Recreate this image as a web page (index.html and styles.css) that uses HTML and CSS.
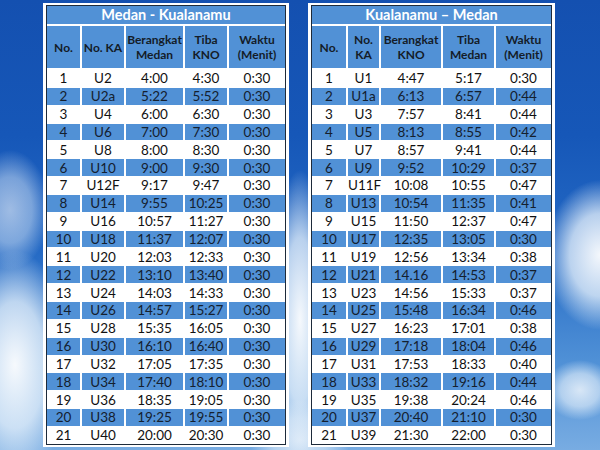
FILE: index.html
```html
<!DOCTYPE html>
<html lang="id">
<head>
<meta charset="utf-8">
<title>Jadwal KA Bandara Kualanamu</title>
<link rel="stylesheet" href="styles.css">
</head>
<body>
<div class="sky">
  <div class="cloud c1"></div>
  <div class="cloud c2"></div>
  <div class="cloud c3"></div>
  <div class="cloud c4"></div>
  <div class="cloud c5"></div>
  <div class="cloud c6"></div>
</div>
<main class="page">
  <section class="card">
    <table class="sched sched-left">
      <colgroup><col class="w1"><col class="w2"><col class="w3"><col class="w4"><col class="w5"></colgroup>
      <thead>
        <tr class="title-row"><th colspan="5">Medan - Kualanamu</th></tr>
        <tr class="head-row"><th>No.</th><th>No. KA</th><th>Berangkat<br>Medan</th><th>Tiba<br>KNO</th><th>Waktu<br>(Menit)</th></tr>
      </thead>
      <tbody>
        <tr><td>1</td><td>U2</td><td>4:00</td><td>4:30</td><td>0:30</td></tr>
        <tr class="alt"><td>2</td><td>U2a</td><td>5:22</td><td>5:52</td><td>0:30</td></tr>
        <tr><td>3</td><td>U4</td><td>6:00</td><td>6:30</td><td>0:30</td></tr>
        <tr class="alt"><td>4</td><td>U6</td><td>7:00</td><td>7:30</td><td>0:30</td></tr>
        <tr><td>5</td><td>U8</td><td>8:00</td><td>8:30</td><td>0:30</td></tr>
        <tr class="alt"><td>6</td><td>U10</td><td>9:00</td><td>9:30</td><td>0:30</td></tr>
        <tr><td>7</td><td>U12F</td><td>9:17</td><td>9:47</td><td>0:30</td></tr>
        <tr class="alt"><td>8</td><td>U14</td><td>9:55</td><td>10:25</td><td>0:30</td></tr>
        <tr><td>9</td><td>U16</td><td>10:57</td><td>11:27</td><td>0:30</td></tr>
        <tr class="alt"><td>10</td><td>U18</td><td>11:37</td><td>12:07</td><td>0:30</td></tr>
        <tr><td>11</td><td>U20</td><td>12:03</td><td>12:33</td><td>0:30</td></tr>
        <tr class="alt"><td>12</td><td>U22</td><td>13:10</td><td>13:40</td><td>0:30</td></tr>
        <tr><td>13</td><td>U24</td><td>14:03</td><td>14:33</td><td>0:30</td></tr>
        <tr class="alt"><td>14</td><td>U26</td><td>14:57</td><td>15:27</td><td>0:30</td></tr>
        <tr><td>15</td><td>U28</td><td>15:35</td><td>16:05</td><td>0:30</td></tr>
        <tr class="alt"><td>16</td><td>U30</td><td>16:10</td><td>16:40</td><td>0:30</td></tr>
        <tr><td>17</td><td>U32</td><td>17:05</td><td>17:35</td><td>0:30</td></tr>
        <tr class="alt"><td>18</td><td>U34</td><td>17:40</td><td>18:10</td><td>0:30</td></tr>
        <tr><td>19</td><td>U36</td><td>18:35</td><td>19:05</td><td>0:30</td></tr>
        <tr class="alt"><td>20</td><td>U38</td><td>19:25</td><td>19:55</td><td>0:30</td></tr>
        <tr><td>21</td><td>U40</td><td>20:00</td><td>20:30</td><td>0:30</td></tr>
      </tbody>
    </table>
  </section>
  <section class="card card-right">
    <table class="sched sched-right">
      <colgroup><col class="r1"><col class="r2"><col class="r3"><col class="r4"><col class="r5"></colgroup>
      <thead>
        <tr class="title-row"><th colspan="5">Kualanamu – Medan</th></tr>
        <tr class="head-row"><th>No.</th><th>No.<br>KA</th><th>Berangkat<br>KNO</th><th>Tiba<br>Medan</th><th>Waktu<br>(Menit)</th></tr>
      </thead>
      <tbody>
        <tr><td>1</td><td>U1</td><td>4:47</td><td>5:17</td><td>0:30</td></tr>
        <tr class="alt"><td>2</td><td>U1a</td><td>6:13</td><td>6:57</td><td>0:44</td></tr>
        <tr><td>3</td><td>U3</td><td>7:57</td><td>8:41</td><td>0:44</td></tr>
        <tr class="alt"><td>4</td><td>U5</td><td>8:13</td><td>8:55</td><td>0:42</td></tr>
        <tr><td>5</td><td>U7</td><td>8:57</td><td>9:41</td><td>0:44</td></tr>
        <tr class="alt"><td>6</td><td>U9</td><td>9:52</td><td>10:29</td><td>0:37</td></tr>
        <tr><td>7</td><td>U11F</td><td>10:08</td><td>10:55</td><td>0:47</td></tr>
        <tr class="alt"><td>8</td><td>U13</td><td>10:54</td><td>11:35</td><td>0:41</td></tr>
        <tr><td>9</td><td>U15</td><td>11:50</td><td>12:37</td><td>0:47</td></tr>
        <tr class="alt"><td>10</td><td>U17</td><td>12:35</td><td>13:05</td><td>0:30</td></tr>
        <tr><td>11</td><td>U19</td><td>12:56</td><td>13:34</td><td>0:38</td></tr>
        <tr class="alt"><td>12</td><td>U21</td><td>14.16</td><td>14:53</td><td>0:37</td></tr>
        <tr><td>13</td><td>U23</td><td>14:56</td><td>15:33</td><td>0:37</td></tr>
        <tr class="alt"><td>14</td><td>U25</td><td>15:48</td><td>16:34</td><td>0:46</td></tr>
        <tr><td>15</td><td>U27</td><td>16:23</td><td>17:01</td><td>0:38</td></tr>
        <tr class="alt"><td>16</td><td>U29</td><td>17:18</td><td>18:04</td><td>0:46</td></tr>
        <tr><td>17</td><td>U31</td><td>17:53</td><td>18:33</td><td>0:40</td></tr>
        <tr class="alt"><td>18</td><td>U33</td><td>18:32</td><td>19:16</td><td>0:44</td></tr>
        <tr><td>19</td><td>U35</td><td>19:38</td><td>20:24</td><td>0:46</td></tr>
        <tr class="alt"><td>20</td><td>U37</td><td>20:40</td><td>21:10</td><td>0:30</td></tr>
        <tr><td>21</td><td>U39</td><td>21:30</td><td>22:00</td><td>0:30</td></tr>
      </tbody>
    </table>
  </section>
</main>
</body>
</html>
```

FILE: styles.css
```css
* { box-sizing: border-box; }

html, body {
  margin: 0;
  padding: 0;
  width: 600px;
  height: 450px;
  overflow: hidden;
}

body {
  position: relative;
  font-family: "Lato", "Open Sans", sans-serif;
  background: linear-gradient(180deg, #1450b0 0%, #1657b8 30%, #2469c4 55%, #4f90d6 80%, #78ace2 100%);
}

.sky {
  position: absolute;
  inset: 0;
  overflow: hidden;
}

.cloud {
  position: absolute;
  border-radius: 50%;
  background: radial-gradient(closest-side, rgba(255,255,255,0.95), rgba(235,244,252,0.75) 55%, rgba(220,235,250,0) 100%);
}

.c1 { left: -40px; top: 250px; width: 110px; height: 230px; }
.c2 { left: -30px; top: 150px; width: 80px; height: 120px; opacity: 0.6; }
.c3 { left: 270px; top: 170px; width: 60px; height: 300px; }
.c4 { left: 545px; top: 180px; width: 110px; height: 150px; }
.c5 { left: 545px; top: 360px; width: 70px; height: 60px; opacity: 0.8; }
.c6 { left: 250px; top: 400px; width: 100px; height: 80px; opacity: 0.7; }

.page {
  position: relative;
  display: flex;
  align-items: flex-start;
  gap: 19px;
  padding: 3px 0 0 43px;
}

.card {
  width: 246px;
  background: #ffffff;
  padding: 2px 3px 2px 3px;
}

.card-right { width: 247px; }

.sched {
  width: 100%;
  table-layout: fixed;
  border-collapse: separate;
  border-spacing: 0;
  border: 1px solid #1d2a3a;
  text-align: center;
  color: #111111;
}

.w1 { width: 33px; }
.w2 { width: 44px; }
.w3 { width: 59px; }
.w4 { width: 44px; }
.w5 { width: 58px; }

.r1 { width: 34px; }
.r2 { width: 33px; }
.r3 { width: 62px; }
.r4 { width: 53px; }
.r5 { width: 57px; }

.sched th,
.sched td {
  padding: 0;
  border-left: 2px solid #ffffff;
}

.sched th:first-child,
.sched td:first-child { border-left: 0; }

.title-row th {
  height: 20px;
  background: #5191d6;
  color: #ffffff;
  font-size: 14.5px;
  font-weight: 700;
  line-height: 18px;
  border-bottom: 2px solid #ffffff;
}

.head-row th {
  height: 43px;
  background: #5191d6;
  color: #141c28;
  font-size: 12px;
  font-weight: 700;
  line-height: 15px;
  border-bottom: 1px solid #ffffff;
}

.sched td {
  height: 17.857px;
  font-size: 13.5px;
  line-height: 16px;
  border-top: 1px solid #ffffff;
}

.sched tbody tr:first-child td { border-top: 0; }

.sched tr.alt td {
  background: #5191d6;
  color: #14202e;
}
```
